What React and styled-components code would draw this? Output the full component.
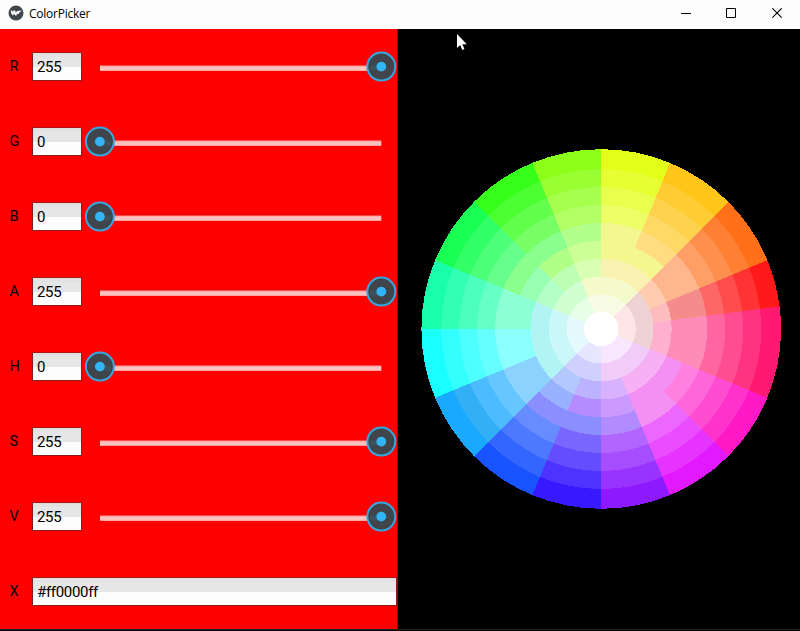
import React from "react";
import styled, { createGlobalStyle } from "styled-components";

const GlobalStyle = createGlobalStyle`
  * { box-sizing: border-box; }
  body { margin: 0; background: #000; overflow: hidden; }
`;

const Window = styled.div`
  position: relative;
  display: flex;
  flex-direction: column;
  width: 800px;
  height: 631px;
  background: #000;
  font-family: Roboto, sans-serif;
`;

const TitleBar = styled.header`
  display: flex;
  align-items: center;
  height: 29px;
  padding-left: 8px;
  background: #fdfdfd;
`;

const AppIcon = styled.svg`
  width: 16px;
  height: 16px;
  margin-top: -3px;
`;

const Title = styled.h1`
  flex: 1;
  margin: -1px 0 0 5px;
  font: 400 12px/16px "Open Sans", sans-serif;
  letter-spacing: -0.25px;
  color: #000;
`;

const Controls = styled.div`
  display: flex;
  height: 29px;
`;

const ControlButton = styled.button`
  display: flex;
  width: ${(p) => p.$width}px;
  padding: 8px 0 0 ${(p) => p.$inset}px;
  border: 0;
  background: none;
`;

const Body = styled.main`
  display: flex;
  height: 600px;
`;

const Panel = styled.section`
  display: flex;
  flex-direction: column;
  width: 398px;
  background: #f00;
  border-right: 1px solid #a00000;
`;

const Row = styled.div`
  display: flex;
  align-items: center;
  height: 75px;
`;

const Label = styled.label`
  width: 32px;
  padding: 0 0 0 9.5px;
  font-size: 14.5px;
  line-height: 17px;
  color: #000;
`;

const Field = styled.input`
  width: ${(p) => (p.$wide ? 365 : 50)}px;
  height: 29px;
  padding: 1px 0 0 4px;
  border: 1px solid #8a1c1c;
  border-top-color: #b01414;
  border-radius: 0;
  outline: 0;
  background: linear-gradient(#dcdcdc 0 1px, #e2e2e2 1px 4px, #e6e6e6 4px 14px, #fdfdfd 14px);
  font: 400 15px/26px Roboto, sans-serif;
  letter-spacing: -0.32px;
  color: #000;
`;

const Slider = styled.svg`
  width: 315px;
  height: 32px;
`;

const WheelPane = styled.section`
  flex: 1;
  background: #000;
`;

const Wheel = styled.svg`
  display: block;
  width: 402px;
  height: 600px;
`;

const BottomEdge = styled.footer`
  height: 2px;
  border-top: 1px solid #202020;
  background: #000;
`;

const Pointer = styled.svg`
  position: absolute;
  left: 456px;
  top: 33px;
  width: 12px;
  height: 19px;
`;

const RADII = [0, 17.3, 34.5, 52.3, 70.5, 88.3, 106, 124, 142, 160, 179.8];

// Cells whose shade departs from the plain HSV ramp, as start angle -> ring -> colour.
const SHADES = {
  0: { 1: "#ffe6e6", 2: "#efd3d4", 3: "#ffbcbc", 4: "#f58c8c", 5: "#f58c8c" },
  22.5: { 1: "#ffe6e6", 2: "#efd3d4", 3: "#ffccb2", 4: "#ffb68c", 5: "#ffb68c" },
  45: { 1: "#f9fce4", 2: "#f4facc", 3: "#faf2b0", 4: "#f4f690", 5: "#ffdc80" },
  67.5: { 1: "#f9fce4", 2: "#f4facc", 3: "#faf2b0", 4: "#f4f690", 5: "#f4f690" },
  90: { 1: "#f9fce4", 2: "#f4facc", 3: "#d8ffb2", 4: "#ccff96", 5: "#b2ff8c" },
  112.5: { 1: "#e6ffe6", 2: "#d0ffd2", 3: "#bcffb2", 4: "#b2ff88", 5: "#8aff8e" },
  135: { 1: "#e6ffe6", 2: "#d0ffd2", 3: "#b2ffc8", 4: "#99ffb2", 5: "#8aff8e" },
  157.5: { 1: "#e5faff", 2: "#ccf7f8", 3: "#b0f4f3", 4: "#8cffd4", 5: "#8cffd4" },
  180: { 1: "#e5faff", 2: "#ccf7f8", 3: "#b0f4f3", 4: "#8cffff", 5: "#8cffff" },
  202.5: { 1: "#e5faff", 2: "#ccf7f8", 3: "#b0f4f3", 4: "#8cd2ff", 5: "#8cd2ff", 8: "#33b0f5" },
  225: { 1: "#e6e6ff", 2: "#d0d0ff", 3: "#b2c8ff", 4: "#99b2ff", 5: "#8a8eff" },
  247.5: { 1: "#e6e6ff", 2: "#d0d0ff", 3: "#bcb2ff", 4: "#b48cff", 5: "#8a8eff" },
  270: { 1: "#f8e6fc", 2: "#f2ccf8", 3: "#d8b2ff", 4: "#cc99ff", 5: "#b28cff" },
  292.5: { 1: "#f8e6fc", 2: "#f2ccf8", 3: "#f8b0f4", 4: "#f48ff4", 5: "#f48ff4" },
  315: { 1: "#f8e6fc", 2: "#f2ccf8", 3: "#f8b0f4", 4: "#f48ff4", 5: "#ff80e0" },
  337.5: { 1: "#ffe6e6", 2: "#efd3d4", 3: "#ffb0cf", 4: "#ff8cb6", 5: "#ff8cb6" },
};

const hsv = (h, s) => {
  const channel = (n) => {
    const k = (n + h / 60) % 6;
    return Math.round(255 * (1 - s * Math.max(0, Math.min(k, 4 - k, 1))));
  };
  return `rgb(${channel(5)}, ${channel(3)}, ${channel(1)})`;
};

const point = (r, deg) => {
  const a = (deg * Math.PI) / 180;
  return `${(203.2 + r * Math.cos(a)).toFixed(2)} ${(300 - r * Math.sin(a)).toFixed(2)}`;
};

const CELLS = [];
for (let ring = 9; ring >= 1; ring -= 1) {
  for (let i = 0; i < 16; i += 1) {
    const hue = i * 22.5;
    const start = hue === 0 ? 7.2 : hue;
    const end = hue === 337.5 ? 367.2 : hue + 22.5;
    const r = RADII[ring + 1];
    CELLS.push({
      key: `${ring}-${i}`,
      fill: SHADES[hue][ring] || hsv(hue, ring / 10),
      d: `M203.2 300L${point(r, start)}A${r} ${r} 0 0 0 ${point(r, end)}Z`,
    });
  }
}

const ROWS = [
  ["R", 255],
  ["G", 0],
  ["B", 0],
  ["A", 255],
  ["H", 0],
  ["S", 255],
  ["V", 255],
];

function ChannelSlider({ value }) {
  const x = 17.9 + (value / 255) * 281.4;
  return (
    <Slider viewBox="0 0 315 32">
      <rect x="18" y="14.5" width="281.2" height="5.5" fill="#ff9999" />
      <rect x="18" y="15.5" width="281.2" height="3.8" fill="#ffc0c0" />
      <circle cx={x} cy="15.6" r="14" fill="#3f454b" stroke="#33a9e0" strokeWidth="2" />
      <rect x={value ? x - 11 : x} y="14.5" width="11" height="5" fill="#3c535d" />
      <circle cx={x} cy="15.6" r="4.9" fill="#32b4f5" />
    </Slider>
  );
}

export default function App() {
  return (
    <Window>
      <GlobalStyle />
      <TitleBar>
        <AppIcon viewBox="0 0 16 16">
          <circle cx="8" cy="8" r="7.5" fill="#40464c" />
          <path d="M2.7 5.1L4.6 6.5L6.2 5L8 7.2L9.2 6.1L14.2 5.6L11.5 7.2L10.5 8.9L9.1 9L8 11L6.2 9.1L4.8 10.5L3.3 8.6Z" fill="#fff" />
          <path d="M6.2 5L5.4 7.5L6.2 9.1M8 7.2L9.1 9" stroke="#aaa" strokeWidth=".5" fill="none" />
        </AppIcon>
        <Title>ColorPicker</Title>
        <Controls>
          <ControlButton $width={45} $inset={7} aria-label="Minimize">
            <svg width="11" height="11"><path d="M0 5.5H10" stroke="#000" /></svg>
          </ControlButton>
          <ControlButton $width={45} $inset={7} aria-label="Maximize">
            <svg width="11" height="11"><path d="M.5.5H9.5V9.5H.5Z" stroke="#000" fill="none" /></svg>
          </ControlButton>
          <ControlButton $width={36} $inset={8} aria-label="Close">
            <svg width="11" height="11"><path d="M.3.3L9.7 9.7M9.7.3L.3 9.7" stroke="#000" strokeWidth="1.1" /></svg>
          </ControlButton>
        </Controls>
      </TitleBar>
      <Body>
        <Panel>
          {ROWS.map(([name, value]) => (
            <Row key={name}>
              <Label>{name}</Label>
              <Field readOnly value={value} />
              <ChannelSlider value={value} />
            </Row>
          ))}
          <Row>
            <Label>X</Label>
            <Field readOnly $wide value="#ff0000ff" />
          </Row>
        </Panel>
        <WheelPane>
          <Wheel viewBox="0 0 402 600" shapeRendering="crispEdges">
            {CELLS.map((cell) => (
              <path key={cell.key} d={cell.d} fill={cell.fill} />
            ))}
            <circle cx="203.2" cy="300" r="17.3" fill="#fff" />
          </Wheel>
        </WheelPane>
      </Body>
      <BottomEdge />
      <Pointer viewBox="0 0 12 19">
        <path d="M1 1V15L4.2 12L6.3 17L8.4 16.1L6.4 11.3H10.8Z" fill="#fff" />
      </Pointer>
    </Window>
  );
}
